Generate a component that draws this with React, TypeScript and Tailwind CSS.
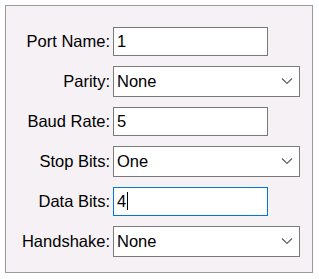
import React from "react";

const Chevron = () => (
  <svg width="12" height="7" viewBox="0 0 12 7" className="absolute right-[6px] top-1/2 -translate-y-1/2">
    <path d="M1 1 L6 6 L11 1" fill="none" stroke="#606060" strokeWidth="1.2" />
  </svg>
);

const TextBox = ({ value, focused }: { value: string; focused?: boolean }) => (
  <div
    className={`h-[29px] w-[155px] bg-white border flex items-center pl-[3px] ${
      focused ? "border-[#0078d7]" : "border-[#7a7a7a]"
    }`}
  >
    <span>{value}</span>
    {focused && <span className="inline-block w-[1px] h-[18px] bg-black ml-[1px]" />}
  </div>
);

const Combo = ({ value }: { value: string }) => (
  <div className="relative h-[31px] w-[187px] bg-white border border-[#7a7a7a] flex items-center pl-[3px]">
    <span>{value}</span>
    <Chevron />
  </div>
);

export default function App() {
  const rows: { label: string; el: React.ReactNode }[] = [
    { label: "Port Name:", el: <TextBox value="1" /> },
    { label: "Parity:", el: <Combo value="None" /> },
    { label: "Baud Rate:", el: <TextBox value="5" /> },
    { label: "Stop Bits:", el: <Combo value="One" /> },
    { label: "Data Bits:", el: <TextBox value="4" focused /> },
    { label: "Handshake:", el: <Combo value="None" /> },
  ];
  return (
    <div
      className="w-[319px] h-[279px] bg-white p-[5px] text-black text-[16.5px]"
      style={{ fontFamily: '"Liberation Sans", Arial, sans-serif' }}
    >
      <div className="w-[308px] h-[268px] bg-[#f5f1f5] border border-[#9a9a9a] pt-[15px]">
        <div className="grid grid-cols-[104px_auto] gap-x-[3px]">
          {rows.map((r) => (
            <React.Fragment key={r.label}>
              <div className="h-[40px] flex items-center justify-end">{r.label}</div>
              <div className="h-[40px] flex items-center">{r.el}</div>
            </React.Fragment>
          ))}
        </div>
      </div>
    </div>
  );
}
